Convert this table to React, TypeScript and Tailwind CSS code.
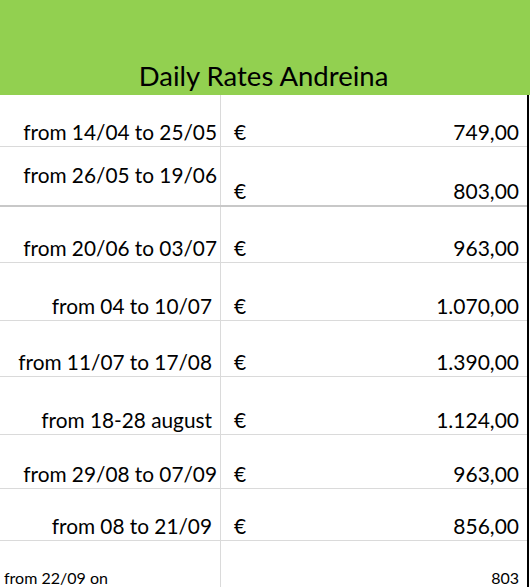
import React from "react";

const rows = [
  { label: "from 14/04 to 25/05", price: "749,00", h: "h-[52px]" },
  { label: "from 26/05 to 19/06", price: "803,00", h: "h-[60px]", split: true },
  { label: "from 20/06 to 03/07", price: "963,00", h: "h-[56px]" },
  { label: "from 04 to 10/07", price: "1.070,00", h: "h-[58px]", pr: true },
  { label: "from 11/07 to 17/08", price: "1.390,00", h: "h-[56px]", pr: true },
  { label: "from 18-28 august", price: "1.124,00", h: "h-[58px]", pr: true },
  { label: "from 29/08 to 07/09", price: "963,00", h: "h-[54px]" },
  { label: "from 08 to 21/09", price: "856,00", h: "h-[52px]", pr: true },
];

export default function App() {
  return (
    <div className="w-[530px] h-[587px] overflow-hidden bg-white text-black" style={{ fontFamily: "Lato, 'Open Sans', sans-serif" }}>
      {/* header */}
      <div className="h-[95px] bg-[#92d050] flex items-end justify-center pb-[2px] pr-[3px]">
        <h1 className="text-[27.5px] leading-[34px]">Daily Rates Andreina</h1>
      </div>

      <div className="w-[529px] border-r-2 border-black">
        {rows.map((r) => (
          <div
            key={r.label}
            className={`grid grid-cols-[221px_1fr] ${r.h} ${r.split ? "border-b-2 border-[#c8c8c8]" : "border-b border-[#dadada]"}`}
          >
            <div className={`flex ${r.split ? "items-center pb-[2px]" : "items-end pb-[1px]"} justify-end border-r border-[#dadada] ${r.pr ? "pr-[8px]" : "pr-[3px]"}`}>
              <span className="text-[20.8px] leading-[26px] whitespace-nowrap">{r.label}</span>
            </div>
            <div className="flex items-end justify-between pl-[13px] pr-[8px] pb-[1px]">
              <span className="text-[21px] leading-[26px]">€</span>
              <span className="text-[21px] leading-[26px]">{r.price}</span>
            </div>
          </div>
        ))}
        <div className="grid grid-cols-[221px_1fr] h-[60px]">
          <div className="flex items-start pt-[27px] pl-[4px] border-r border-[#dadada]">
            <span className="text-[16px] leading-[20px]">from 22/09 on</span>
          </div>
          <div className="flex items-start pt-[27px] justify-end pr-[8px]">
            <span className="text-[16px] leading-[20px]">803</span>
          </div>
        </div>
      </div>
    </div>
  );
}
